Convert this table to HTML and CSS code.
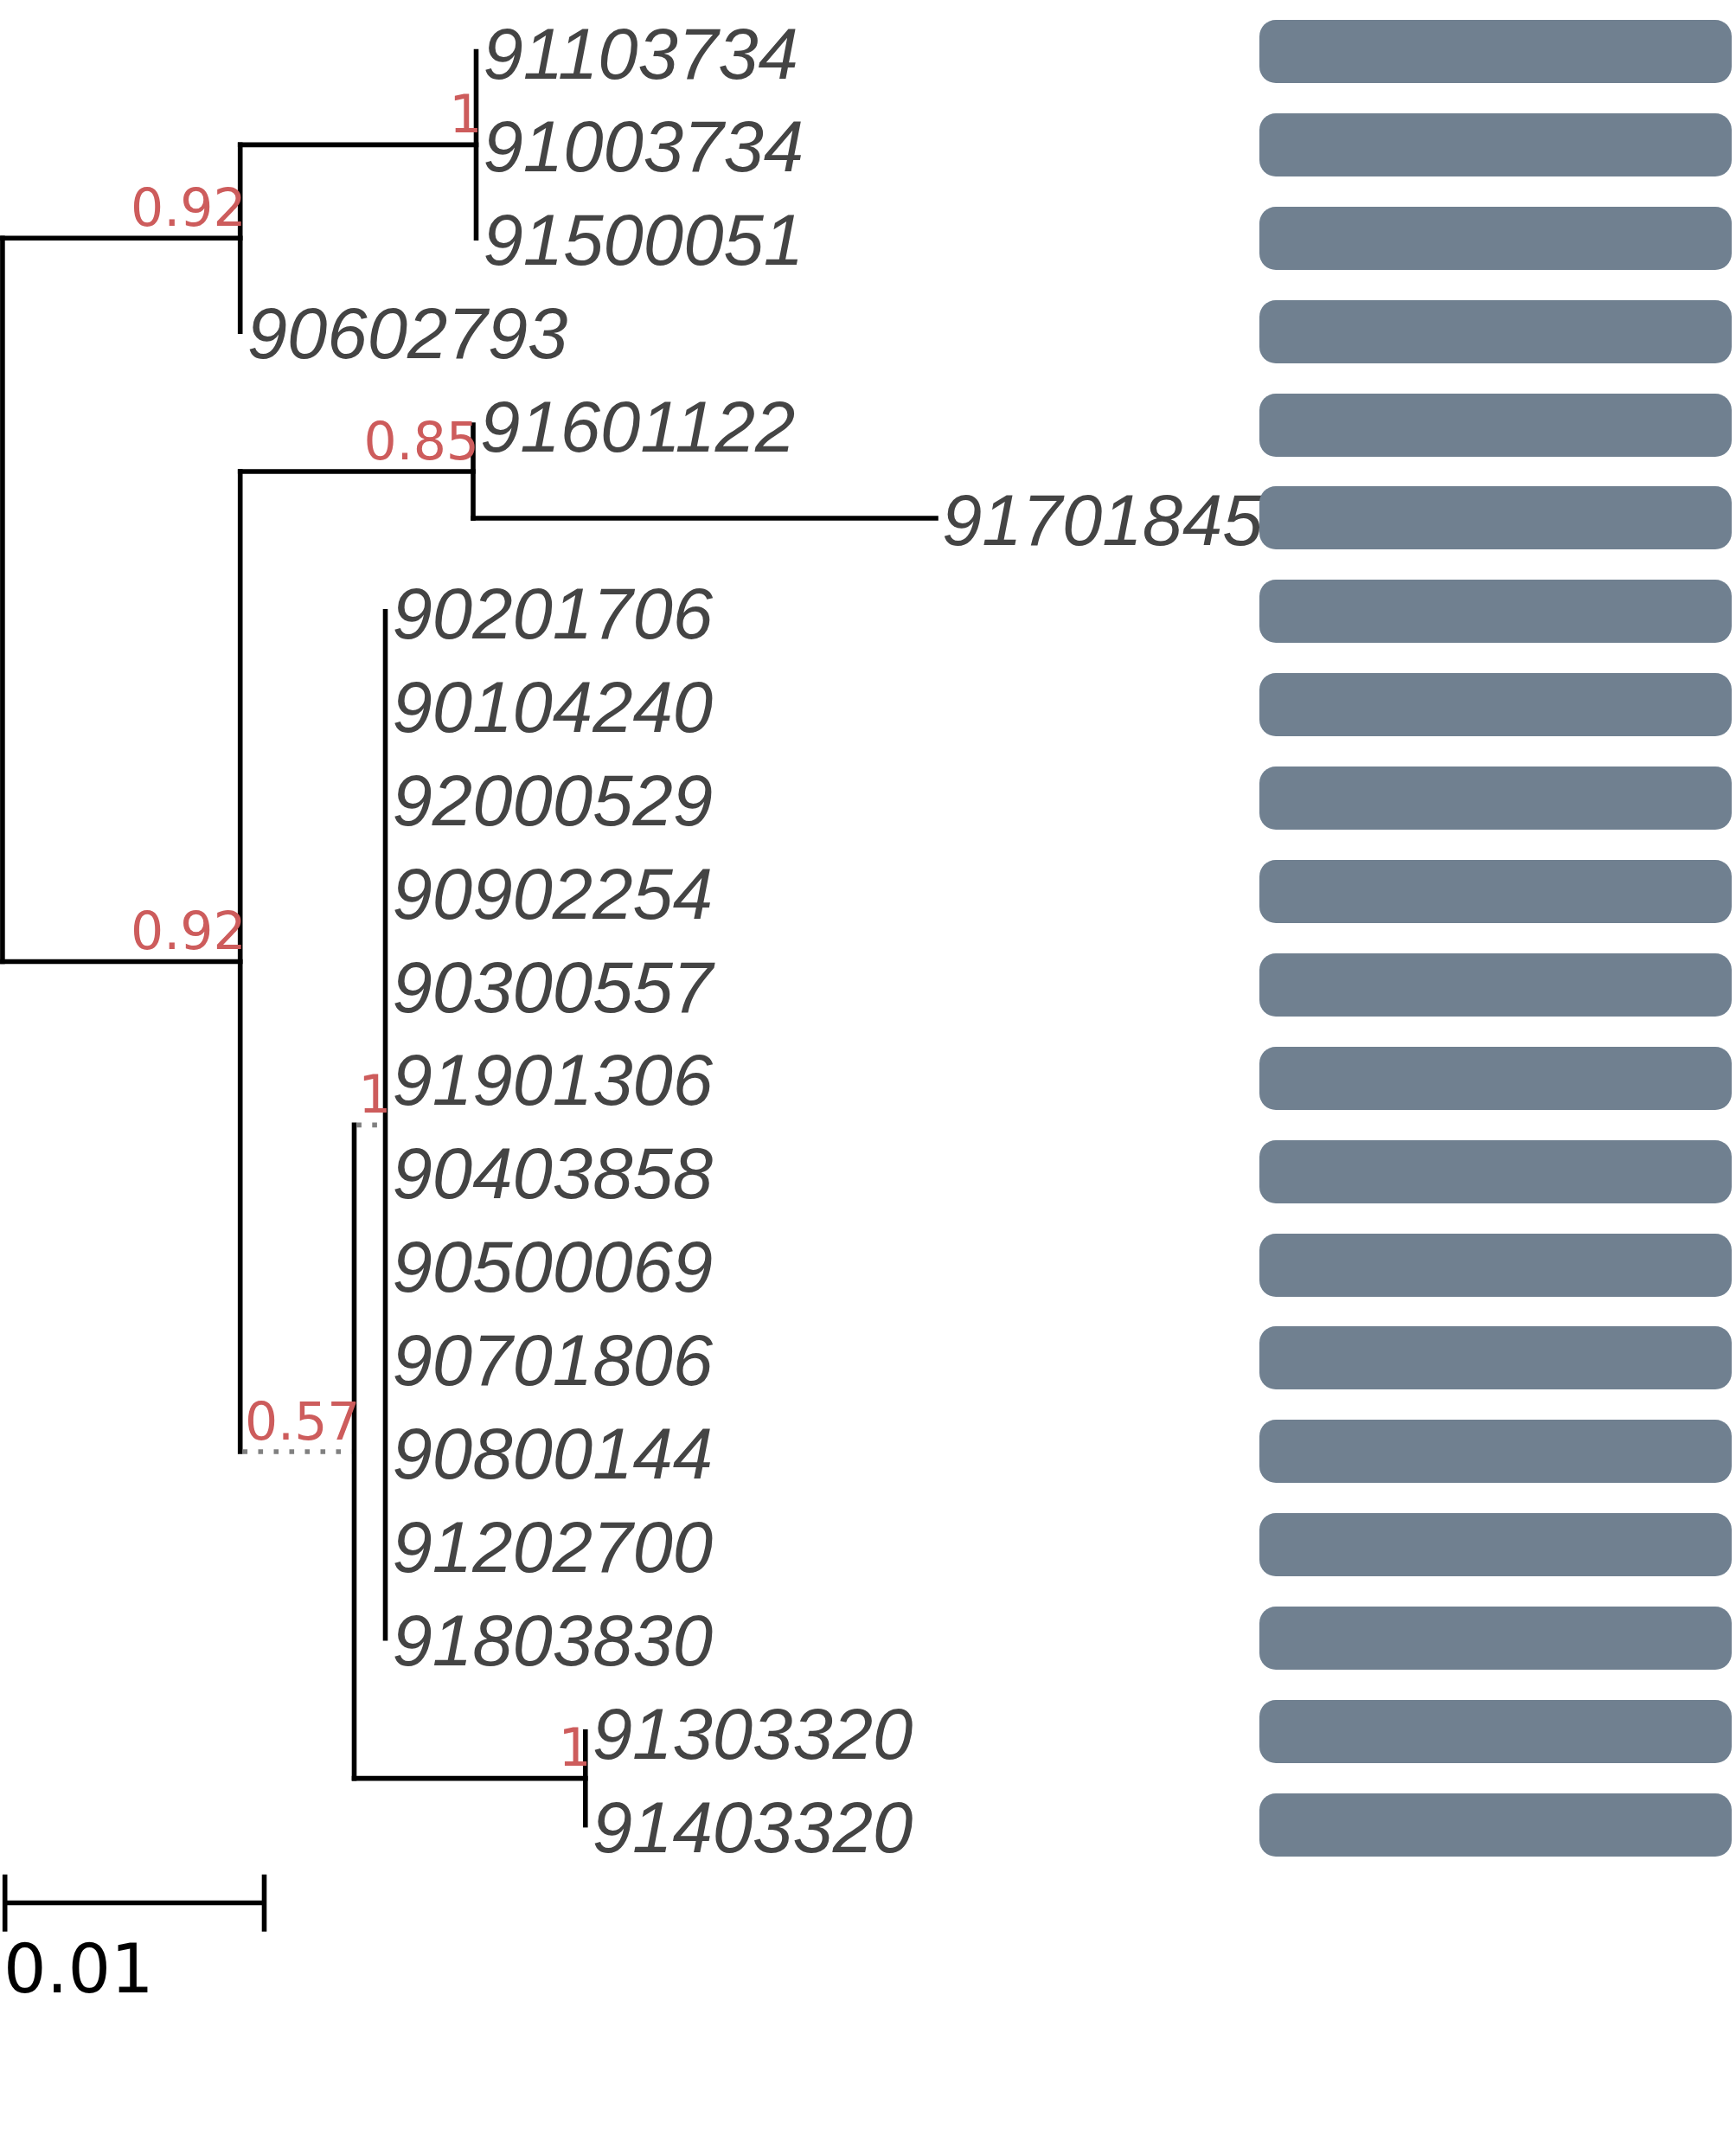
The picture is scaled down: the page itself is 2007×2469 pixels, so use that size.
FILE: index.html
```html
<!DOCTYPE html>
<html lang="en">
<head>
<meta charset="utf-8">
<title>Phylogenetic tree</title>
<link rel="stylesheet" href="styles.css">
</head>
<body>
<main class="figure">
  <svg class="tree" width="1456" height="2469" viewBox="0 0 1456 2469" xmlns="http://www.w3.org/2000/svg">
    <g class="branches">
      <path class="branch" d="M2.9 275.3 H277.7"/>
      <path class="branch" d="M2.9 1111.5 H277.7"/>
      <path class="branch" d="M277.7 167.4 H550.5"/>
      <path class="branch" d="M277.7 545.05 H547"/>
      <path class="branch" d="M547 599 H1082"/>
      <path class="branch" d="M409.5 2055.65 H676.8"/>
      <path class="branch" d="M2.9 275.3 V1111.5"/>
      <path class="branch" d="M277.7 167.4 V383.2"/>
      <path class="branch" d="M550.5 59.5 V275.3"/>
      <path class="branch" d="M277.7 545.05 V1678"/>
      <path class="branch" d="M547 491.1 V599"/>
      <path class="branch" d="M409.5 1300.35 V2055.65"/>
      <path class="branch" d="M445.5 706.9 V1893.8"/>
      <path class="branch" d="M676.8 2001.7 V2109.6"/>
      <path class="dotted" d="M280.5 1678 H406.7"/>
      <path class="dotted" d="M412.3 1300.35 H442.7"/>
    </g>
    <g class="supports">
      <text class="support" x="284.7" y="260.8">0.92</text>
      <text class="support" x="557.5" y="152.9">1</text>
      <text class="support" x="284.7" y="1097">0.92</text>
      <text class="support" x="554" y="530.5">0.85</text>
      <text class="support" x="416.5" y="1663.5">0.57</text>
      <text class="support" x="452.5" y="1285.85">1</text>
      <text class="support" x="683.8" y="2041.15">1</text>
    </g>
    <g class="leaves">
      <text class="leaf" x="558.5" y="90.5">91103734</text>
      <text class="leaf" x="558.5" y="198.4">91003734</text>
      <text class="leaf" x="558.5" y="306.3">91500051</text>
      <text class="leaf" x="285.7" y="414.2">90602793</text>
      <text class="leaf" x="555" y="522.1">91601122</text>
      <text class="leaf" x="1089" y="630">91701845</text>
      <text class="leaf" x="453.5" y="737.9">90201706</text>
      <text class="leaf" x="453.5" y="845.8">90104240</text>
      <text class="leaf" x="453.5" y="953.7">92000529</text>
      <text class="leaf" x="453.5" y="1061.6">90902254</text>
      <text class="leaf" x="453.5" y="1169.5">90300557</text>
      <text class="leaf" x="453.5" y="1277.4">91901306</text>
      <text class="leaf" x="453.5" y="1385.3">90403858</text>
      <text class="leaf" x="453.5" y="1493.2">90500069</text>
      <text class="leaf" x="453.5" y="1601.1">90701806</text>
      <text class="leaf" x="453.5" y="1709">90800144</text>
      <text class="leaf" x="453.5" y="1816.9">91202700</text>
      <text class="leaf" x="453.5" y="1924.8">91803830</text>
      <text class="leaf" x="684.8" y="2032.7">91303320</text>
      <text class="leaf" x="684.8" y="2140.6">91403320</text>
    </g>
    <g class="scale">
      <path class="scale-line" d="M5.7 2199.5 H305.5"/>
      <path class="scale-line" d="M5.7 2166.7 V2232.7"/>
      <path class="scale-line" d="M305.5 2166.7 V2232.7"/>
      <text class="scale-label" x="4" y="2302.7">0.01</text>
    </g>
  </svg>
  <div class="bars">
    <div class="bar"></div>
    <div class="bar"></div>
    <div class="bar"></div>
    <div class="bar"></div>
    <div class="bar"></div>
    <div class="bar"></div>
    <div class="bar"></div>
    <div class="bar"></div>
    <div class="bar"></div>
    <div class="bar"></div>
    <div class="bar"></div>
    <div class="bar"></div>
    <div class="bar"></div>
    <div class="bar"></div>
    <div class="bar"></div>
    <div class="bar"></div>
    <div class="bar"></div>
    <div class="bar"></div>
    <div class="bar"></div>
    <div class="bar"></div>
  </div>
</main>
</body>
</html>
```

FILE: styles.css
```css
html, body {
  margin: 0;
  padding: 0;
  background: #ffffff;
}

.figure {
  display: flex;
  align-items: flex-start;
  width: 2007px;
  height: 2469px;
}

.tree {
  flex: none;
  display: block;
  overflow: visible;
}

.branch {
  fill: none;
  stroke: #000000;
  stroke-width: 5.6;
  stroke-linecap: square;
}

.dotted {
  fill: none;
  stroke: #808080;
  stroke-width: 5.6;
  stroke-linecap: butt;
  stroke-dasharray: 5.6 12.4;
}

.scale-line {
  fill: none;
  stroke: #000000;
  stroke-width: 5.6;
  stroke-linecap: butt;
}

.leaf {
  font-family: "Liberation Sans", Arial, sans-serif;
  font-style: italic;
  font-size: 83.3px;
  fill: #444444;
}

.support {
  font-family: "DejaVu Sans", sans-serif;
  font-size: 60px;
  fill: #cd5c5c;
  text-anchor: end;
}

.scale-label {
  font-family: "DejaVu Sans", sans-serif;
  font-size: 78px;
  fill: #000000;
}

.bars {
  flex: none;
  width: 546px;
  display: flex;
  flex-direction: column;
  gap: 34.9px;
  padding-top: 23px;
}

.bar {
  height: 73px;
  border-radius: 19px;
  background: #708090;
}
```
